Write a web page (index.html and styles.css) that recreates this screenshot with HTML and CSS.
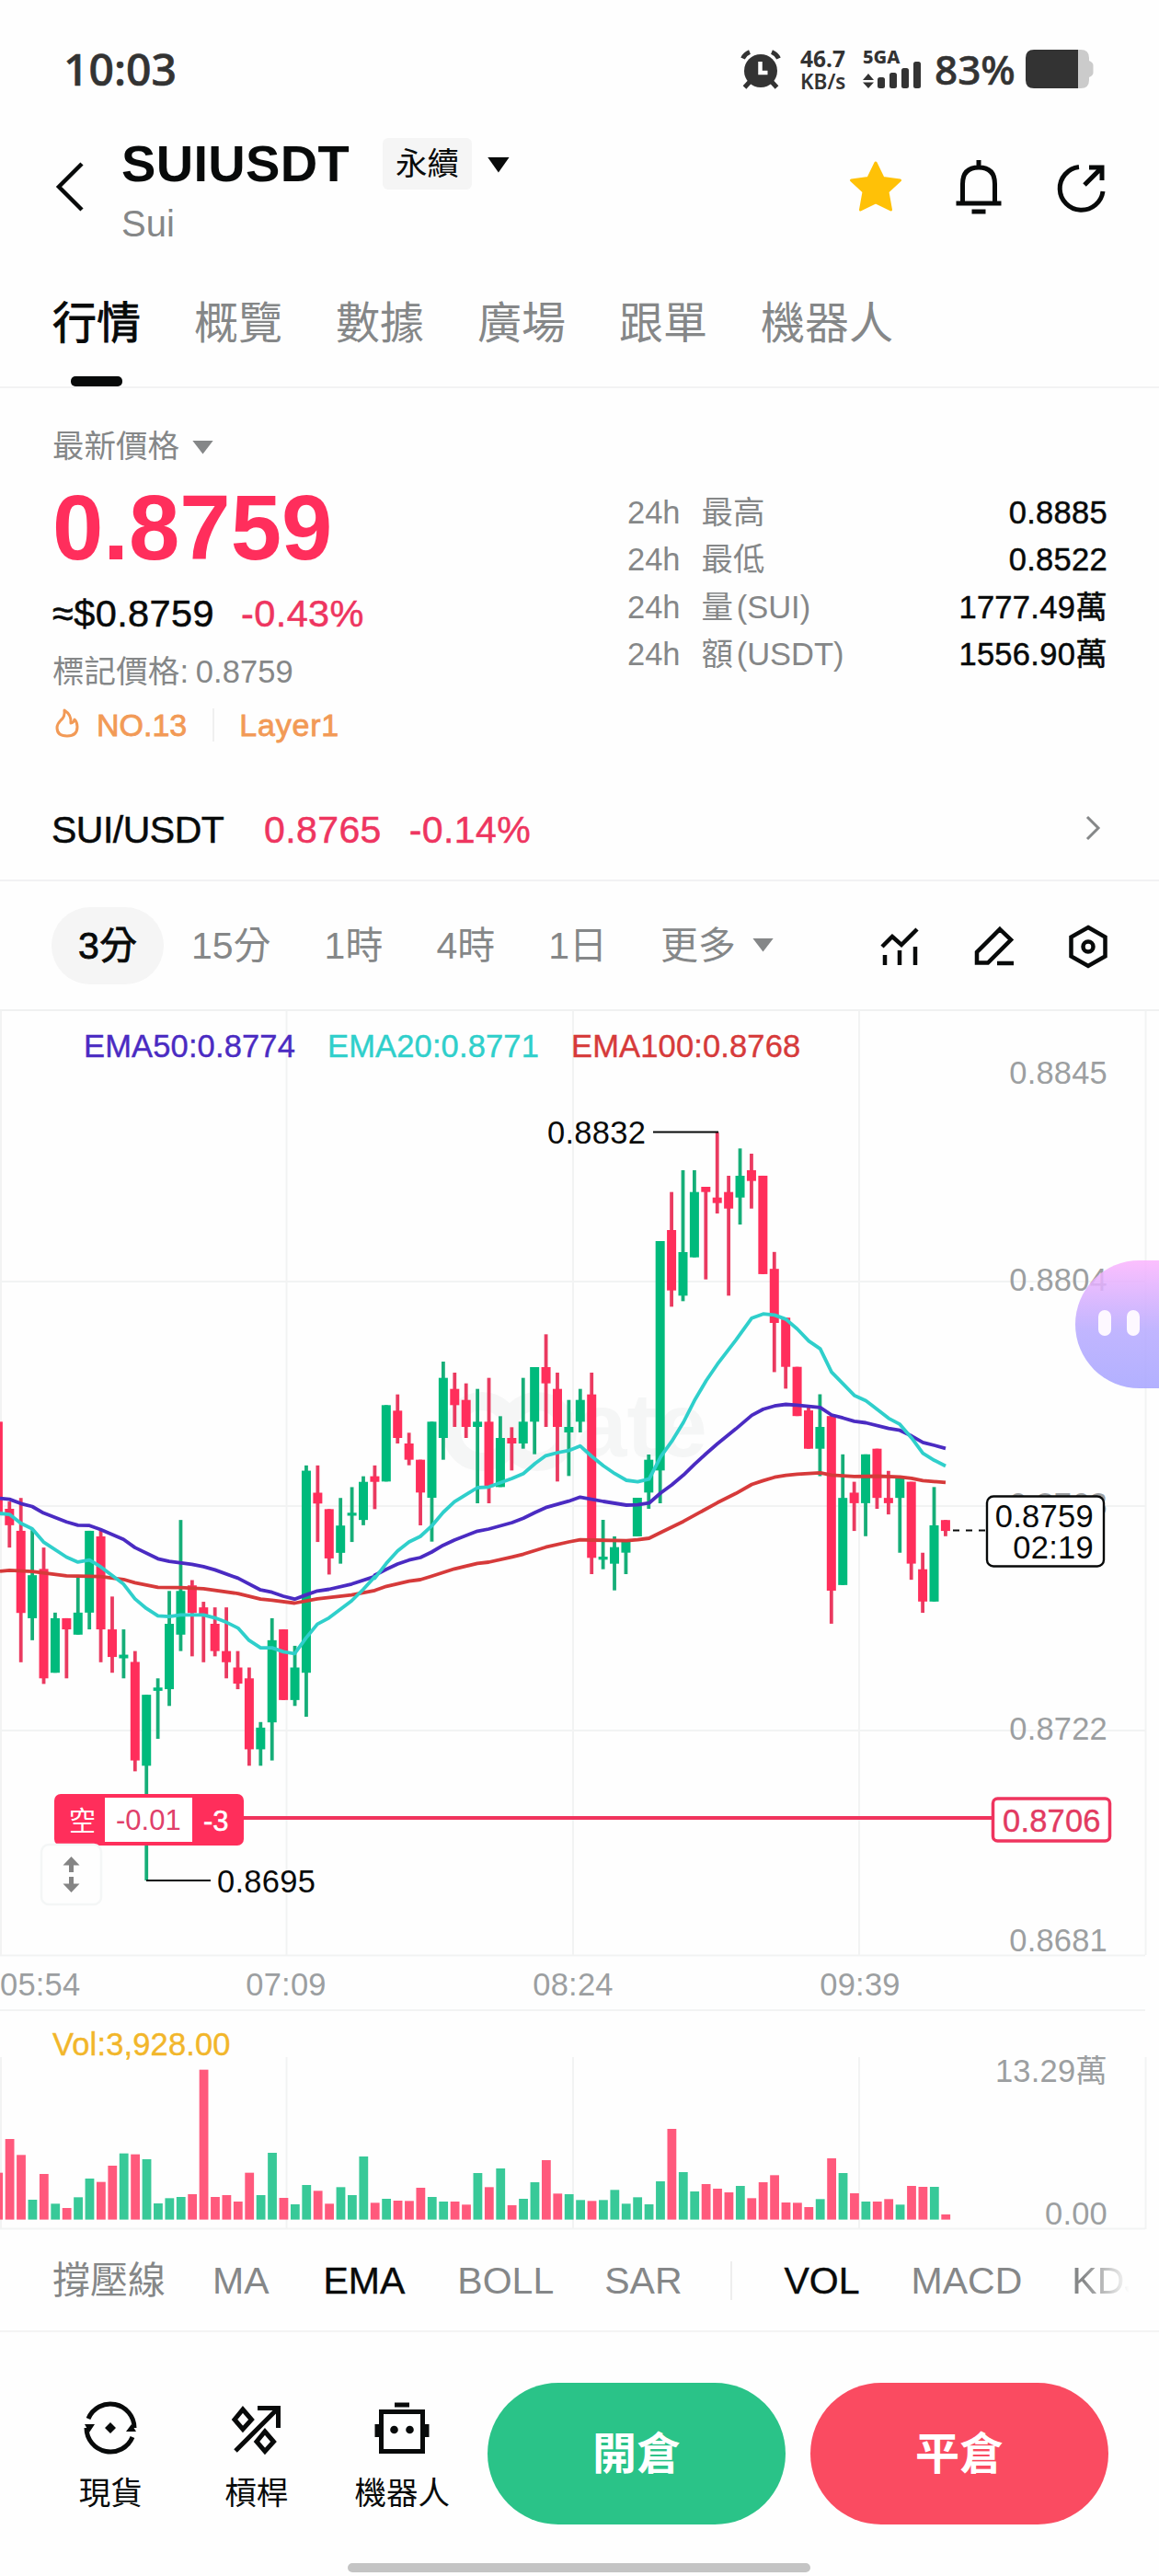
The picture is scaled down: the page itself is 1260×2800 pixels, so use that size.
FILE: index.html
```html
<!DOCTYPE html>
<html lang="zh-Hant">
<head>
<meta charset="utf-8">
<title>SUIUSDT 永續</title>
<link rel="stylesheet" href="styles.css">
</head>
<body>
<div class="statusbar">
  <span class="clock">10:03</span>
  <div class="status-right">
    <svg class="alarm" width="44" height="44" viewBox="0 0 44 44"><circle cx="22" cy="23" r="18"/><path class="alarm-line" d="M2.500 9.500Q5 4.500 10 2.500M41.500 9.500Q39 4.500 34 2.500M10 35L4.500 41M34 35L39.500 41"/><path class="alarm-hand" d="M21.500 13V25H29.500"/></svg>
    <div class="speed"><span>46.7</span><span>KB/s</span></div>
    <div class="signal"><span>5GA</span>
      <svg width="66" height="32" viewBox="0 0 66 32"><path d="M6 14L12 21H0zM6 30L12 23.500H0z"/><rect x="16" y="18" width="8" height="12" rx="2.500"/><rect x="29" y="13" width="8" height="17" rx="2.500"/><rect x="42" y="8" width="8" height="22" rx="2.500"/><rect x="55" y="1" width="8" height="29" rx="2.500"/></svg>
    </div>
    <span class="percent">83%</span>
    <svg width="74" height="42" viewBox="0 0 74 42"><path class="battery-rest" d="M50 0H60Q69 0 69 9V12Q73.500 14 73.500 17V25Q73.500 28 69 30V33Q69 42 60 42H50z"/><path d="M9 0H57V42H9Q0 42 0 33V9Q0 0 9 0z"/></svg>
  </div>
</div>

<header class="header">
  <svg class="back" width="32" height="56" viewBox="0 0 32 56"><path d="M29 3L4 28L29 53"/></svg>
  <div class="pair">
    <div class="pair-top"><h1>SUIUSDT</h1><span class="badge">永續</span><i class="caret caret-dark"></i></div>
    <div class="pair-sub">Sui</div>
  </div>
  <div class="header-icons">
    <svg class="star" width="64" height="64" viewBox="0 0 64 64"><path d="M32 6L40 22.500L58.500 25L45 37.500L48.500 57L32 49L15.500 57L19 37.500L5.500 25L24 22.500z"/></svg>
    <svg class="line-icon" width="64" height="64" viewBox="0 0 64 64"><path d="M14.500 50V29Q14.500 11 32 11Q49.500 11 49.500 29V50M7.500 50H56.500M32 3V11M24.500 59H39.500"/></svg>
    <svg class="line-icon" width="64" height="64" viewBox="0 0 64 64"><path d="M29 10.500A23.500 23.500 0 1 0 55 37M35 30L53 12M40 11H54V25"/></svg>
  </div>
</header>

<nav class="tabs">
  <span class="tab active">行情</span><span class="tab">概覽</span><span class="tab">數據</span><span class="tab">廣場</span><span class="tab">跟單</span><span class="tab">機器人</span>
</nav>

<section class="summary">
  <div class="quote">
    <div class="quote-label">最新價格<i class="caret caret-gray"></i></div>
    <div class="price">0.8759</div>
    <div class="approx"><span>≈$0.8759</span><span class="down">-0.43%</span></div>
    <div class="mark">標記價格: 0.8759</div>
    <div class="tags">
      <svg width="28" height="34" viewBox="0 0 28 34"><path d="M11 3Q12 10 7 14Q3 18 3 22Q3 31 14 31Q25 31 25 21Q25 16 22 13Q21 17 18 17Q19 8 11 3z"/></svg>
      <span>NO.13</span><i class="tag-rule"></i><span class="tag-layer">Layer1</span>
    </div>
  </div>
  <dl class="stats">
    <div><dt><span>24h</span>最高</dt><dd>0.8885</dd></div>
    <div><dt><span>24h</span>最低</dt><dd>0.8522</dd></div>
    <div><dt><span>24h</span>量 (SUI)</dt><dd>1777.49萬</dd></div>
    <div><dt><span>24h</span>額 (USDT)</dt><dd>1556.90萬</dd></div>
  </dl>
</section>

<div class="spot">
  <span class="spot-name">SUI/USDT</span><span class="down">0.8765</span><span class="down spot-change">-0.14%</span>
  <svg width="18" height="30" viewBox="0 0 18 30"><path d="M3 3L15 15L3 27"/></svg>
</div>

<div class="intervals">
  <span class="interval on">3分</span><span class="interval">15分</span><span class="interval">1時</span><span class="interval">4時</span><span class="interval">1日</span><span class="interval more">更多<i class="caret caret-gray"></i></span>
  <div class="tools">
    <svg width="48" height="48" viewBox="0 0 48 48"><path d="M4 24L15 13L25 22L42 5M7 33V44M23 28V44M40 24V44"/></svg>
    <svg width="48" height="48" viewBox="0 0 48 48"><path d="M30 5L42 16.500L17 41.500H5V30zM27 42H45"/></svg>
    <svg width="48" height="48" viewBox="0 0 48 48"><path d="M24 3L42.500 13.500V34.500L24 45L5.500 34.500V13.500z"/><circle cx="24" cy="24" r="5.500"/></svg>
  </div>
</div>

<main class="chart">
  <svg class="price-chart" width="1260" height="1087" viewBox="0 1099 1260 1087">
    <path class="grid" d="M1 1099V2125M311.500 1099V2125M623 1099V2125M934 1099V2125M1245.500 1099V2125M0 1393H1245M0 1637H1245M0 1881H1245M0 2125.500H1245M0 2185H1245"/>
    <g class="watermark"><circle cx="524" cy="1556" r="33"/><circle cx="584" cy="1556" r="33"/><text x="627" y="1583">ate</text></g>
    <g class="axis">
      <text x="1204" y="1178" text-anchor="end">0.8845</text>
      <text x="1204" y="1403" text-anchor="end">0.8804</text>
      <text x="1204" y="1647" text-anchor="end">0.8763</text>
      <text x="1204" y="1891" text-anchor="end">0.8722</text>
      <text x="1204" y="2121" text-anchor="end">0.8681</text>
      <text x="0" y="2169">05:54</text>
      <text x="311" y="2169" text-anchor="middle">07:09</text>
      <text x="623" y="2169" text-anchor="middle">08:24</text>
      <text x="935" y="2169" text-anchor="middle">09:39</text>
    </g>
    <g id="candles"></g>
    <g id="averages"></g>
    <text class="legend ema50" x="91" y="1149">EMA50:0.8774</text>
    <text class="legend ema20" x="356" y="1149">EMA20:0.8771</text>
    <text class="legend ema100" x="621" y="1149">EMA100:0.8768</text>
    <path class="leader" d="M710 1230.500H781M159 2044H229"/>
    <text class="extreme" x="595" y="1243">0.8832</text>
    <text class="extreme" x="236" y="2057">0.8695</text>
    <path class="entry-line" d="M264 1976H1078"/>
    <rect class="entry-box" x="1079.500" y="1955" width="127" height="46" rx="5"/>
    <text class="entry-price" x="1090" y="1991">0.8706</text>
    <rect class="entry-tag" x="59" y="1950" width="206" height="56" rx="7"/>
    <rect class="entry-size" x="114" y="1954" width="95" height="48"/>
    <text class="entry-side" x="75" y="1990">空</text>
    <text class="entry-amount" x="126" y="1989">-0.01</text>
    <text class="entry-pnl" x="221" y="1990">-3</text>
    <path class="dash" d="M1036 1663.500H1071"/>
    <rect class="now-box" x="1073" y="1626.500" width="127" height="76" rx="7"/>
    <text class="extreme" x="1189" y="1660" text-anchor="end">0.8759</text>
    <text class="extreme" x="1189" y="1693.500" text-anchor="end">02:19</text>
    <rect class="stretch" x="45" y="2005" width="65" height="65" rx="8"/>
    <path class="stretch-arrows" d="M77.500 2018L86.500 2027.500H80V2035H75V2027.500H68.500zM77.500 2057L86.500 2047.500H80V2040H75V2047.500H68.500z"/>
  </svg>
  <svg class="volume-chart" width="1260" height="239" viewBox="0 2186 1260 239">
    <path class="grid" d="M1 2236V2423M311.500 2236V2423M623 2236V2423M934 2236V2423M1245.500 2236V2423M0 2422.500H1245"/>
    <g id="volumes"></g>
    <text class="legend vol" x="57" y="2234">Vol:3,928.00</text>
    <g class="axis"><text x="1204" y="2263" text-anchor="end">13.29萬</text><text x="1204" y="2418" text-anchor="end">0.00</text></g>
  </svg>
  <div class="bot"><i></i><i></i></div>
</main>

<div class="indicators">
  <span>撐壓線</span><span>MA</span><span class="on">EMA</span><span>BOLL</span><span>SAR</span><i></i><span class="on">VOL</span><span>MACD</span><span class="kdj">KDJ</span>
</div>

<footer class="footer">
  <div class="shortcuts">
    <div class="shortcut"><svg width="64" height="64" viewBox="0 0 64 64"><path d="M8 22A26 26 0 0 1 58 32M56 42A26 26 0 0 1 6 32"/><path class="solid" d="M60 36H49L55 28zM4 28H15L9 37zM32 26L38 32L32 38L26 32z"/></svg><span>現貨</span></div>
    <div class="shortcut"><svg width="64" height="64" viewBox="0 0 64 64"><path d="M9 57L55 11M33 10.500H55.500V32M17 12L26.500 23L17 33.500L8 23zM41 36L50.500 47L41 57.500L32 47z"/></svg><span>槓桿</span></div>
    <div class="shortcut"><svg width="64" height="64" viewBox="0 0 64 64"><path d="M9.500 14.500H54.500V57.500H9.500zM24 7H40M5 28V42M59 28V42"/><circle class="solid" cx="23.500" cy="34" r="4.300"/><circle class="solid" cx="40.500" cy="34" r="4.300"/></svg><span>機器人</span></div>
  </div>
  <button class="trade open">開倉</button>
  <button class="trade close">平倉</button>
  <i class="homebar"></i>
</footer>
<script src="chart.js"></script>
</body>
</html>
```
FILE: styles.css
```css
* { box-sizing: border-box; }
body {
  margin: 0;
  width: 1260px;
  height: 2800px;
  overflow: hidden;
  background: #fefefe;
  color: #080a0a;
  font-family: "Liberation Sans", "Noto Sans CJK TC", sans-serif;
  font-size: 34.5px;
}
svg { display: block; flex: none; overflow: visible; }
i { font-style: normal; }
.down { color: #ee3560; letter-spacing: 0.4px; }

.statusbar {
  height: 150px;
  padding: 0 71px 0 69px;
  display: flex;
  justify-content: space-between;
  color: #333;
  fill: #333;
  font-family: "Noto Sans", sans-serif;
}
.clock { font-size: 48px; font-weight: 500; line-height: 150px; -webkit-text-stroke: 0.7px; }
.status-right { display: flex; align-items: flex-start; padding-top: 54px; }
.alarm-line { fill: none; stroke: #333; stroke-width: 5; }
.alarm-hand { fill: none; stroke: #fff; stroke-width: 4.5; }
.speed {
  width: 50px;
  margin: -3px 0 0 21px;
  display: flex;
  flex-direction: column;
  font-size: 24.5px;
  font-weight: 700;
  line-height: 25px;
  white-space: nowrap;
}
.speed span + span { font-size: 22.5px; font-weight: 600; }
.signal {
  width: 66px;
  margin: -3px 0 0 18px;
  display: flex;
  flex-direction: column;
  font-size: 20px;
  font-weight: 800;
  line-height: 22px;
}
.signal svg { margin-top: -7px; }
.percent { margin: 0 0 0 12px; width: 99px; font-size: 44px; font-weight: 500; line-height: 42px; -webkit-text-stroke: 0.6px; }
.battery-rest { fill: #cbcbcb; }

.header { height: 118px; display: flex; padding: 0 52px 0 60px; }
.back { margin: 25px 40px 0 0; fill: none; stroke: #080a0a; stroke-width: 4.5; }
.pair { flex: 1; }
.pair-top { display: flex; align-items: center; height: 56px; }
h1 { margin: 0; font-size: 56px; line-height: 56px; font-weight: 700; letter-spacing: 0.3px; }
.badge {
  width: 97px;
  height: 56px;
  margin-left: 36px;
  border-radius: 6px;
  background: #f5f5f5;
  font-size: 34.5px;
  line-height: 56px;
  text-align: center;
}
.caret { display: block; width: 23px; height: 15px; clip-path: polygon(0 0, 100% 0, 50% 100%); }
.caret-dark { margin: 2px 0 0 17px; width: 24px; height: 17px; background: #080a0a; }
.caret-gray { margin: 2px 0 0 14px; background: #858788; }
.pair-sub { margin-top: 12px; font-size: 40px; line-height: 50px; color: #858788; }
.header-icons { display: flex; align-items: center; gap: 48px; height: 106px; }
.star { fill: #ffc107; stroke: #ffc107; stroke-width: 3; stroke-linejoin: round; }
.line-icon { fill: none; stroke: #080a0a; stroke-width: 5; }

.tabs {
  height: 154px;
  padding: 54px 57px 0;
  display: flex;
  gap: 58px;
  border-bottom: 2px solid #f2f2f3;
  font-size: 48px;
  line-height: 60px;
  color: #858788;
}
.tab.active {
  color: #080a0a;
  -webkit-text-stroke: 0.9px;
  display: flex;
  flex-direction: column;
  align-items: center;
}
.tab.active::after { content: ""; width: 56px; height: 11px; margin-top: 27px; border-radius: 5px; background: #080a0a; }

.summary { height: 386px; display: flex; justify-content: space-between; padding: 43px 56px 0 57px; }
.quote-label { display: flex; align-items: center; line-height: 40px; color: #858788; }
.price { margin-top: 19px; font-size: 99.5px; line-height: 100px; font-weight: 700; color: #ff2e5c; }
.approx { margin-top: 18px; display: flex; gap: 29px; font-size: 41.5px; line-height: 50px; letter-spacing: 0.4px; -webkit-text-stroke: 0.5px; }
.mark { margin-top: 18px; line-height: 40px; color: #858788; letter-spacing: 0.1px; word-spacing: -2px; }
.tags { margin-top: 18px; display: flex; align-items: center; line-height: 40px; color: #f29a56; font-size: 34px; -webkit-text-stroke: 0.8px; }
.tags svg { margin: -5px 18px 0 2px; fill: none; stroke: #f29a56; stroke-width: 3; stroke-linejoin: round; }
.tag-rule { width: 2px; height: 36px; margin: 0 27px 0 28px; background: #f0f0f0; }
.tag-layer { letter-spacing: 0.8px; }
.stats { width: 522px; margin: 67px 0 0; line-height: 51.4px; }
.stats div { display: flex; justify-content: space-between; }
.stats dt { color: #858788; word-spacing: -6px; }
.stats dt span { margin-right: 23px; }
.stats dd { margin: 0; letter-spacing: 0.3px; -webkit-text-stroke: 0.5px; }

.spot {
  height: 150px;
  padding: 64px 63px 0 56px;
  display: flex;
  border-bottom: 2px solid #f2f2f3;
  font-size: 41px;
  line-height: 60px;
  -webkit-text-stroke: 0.5px;
}
.spot-name { width: 231px; letter-spacing: -0.5px; }
.spot-change { margin-left: 30px; }
.spot svg { margin: 13px 0 0 auto; fill: none; stroke: #858788; stroke-width: 3; }

.intervals {
  height: 141px;
  padding: 28px 53px 0 56px;
  display: flex;
  align-items: flex-start;
  border-bottom: 2px solid #f0f1f1;
  font-size: 41px;
  line-height: 84px;
  color: #858788;
}
.interval { margin-right: 58px; }
.interval.on { width: 122px; margin-right: 30px; border-radius: 42px; background: #f5f5f5; color: #080a0a; text-align: center; -webkit-text-stroke: 0.8px; }
.more { display: flex; align-items: center; height: 84px; }
.more .caret { margin: -2px 0 0 18px; }
.tools { margin: 19px 0 0 auto; display: flex; gap: 54px; fill: none; stroke: #080a0a; stroke-width: 4.5; }
.more { margin-right: 0; }

.chart { position: relative; height: 1326px; }
.grid { fill: none; stroke: #f2f3f3; stroke-width: 2; }
.axis { fill: #9c9fa1; font-size: 34.5px; letter-spacing: 0.2px; }
.watermark circle { fill: none; stroke: #f5f6f6; stroke-width: 20; }
.watermark text { fill: #f5f6f6; font-size: 98px; font-weight: 700; }
.legend { font-size: 34.5px; stroke-width: 0.4; letter-spacing: 0.15px; }
.ema50 { fill: #4a2bc2; stroke: #4a2bc2; }
.ema20 { fill: #2fcfcb; stroke: #2fcfcb; }
.ema100 { fill: #d63a3a; stroke: #d63a3a; }
.vol { fill: #f2b62a; stroke: #f2b62a; }
.avg { fill: none; stroke-width: 3.8; stroke-linejoin: round; }
.wick-up { fill: #16ae78; }
.wick-down { fill: #ea3a60; }
.body-up { fill: #00ba7c; }
.body-down { fill: #ff2e5b; }
.bar-up { fill: #38c998; }
.bar-down { fill: #ff597c; }
.leader { fill: none; stroke: #080a0a; stroke-width: 2.2; }
.extreme { fill: #080a0a; font-size: 34.5px; letter-spacing: 0.3px; }
.entry-line { stroke: #f0335c; stroke-width: 4; }
.entry-box { fill: #fff; stroke: #ef345e; stroke-width: 3.5; }
.entry-price { fill: #e23a61; font-size: 34.5px; stroke: #e23a61; stroke-width: 0.4; letter-spacing: 0.2px; }
.entry-tag { fill: #ff2e5b; }
.entry-size { fill: #fff; }
.entry-side { fill: #fff; font-size: 29px; }
.entry-amount { fill: #e0406a; font-size: 31px; }
.entry-pnl { fill: #fff; font-size: 31px; stroke: #fff; stroke-width: 0.5; }
.dash { stroke: #080a0a; stroke-width: 2.2; stroke-dasharray: 7 7; }
.now-box { fill: #fff; stroke: #080a0a; stroke-width: 2.4; }
.stretch { fill: #fefefe; fill-opacity: 0.9; stroke: #f4f6f6; stroke-width: 2.5; }
.stretch-arrows { fill: #848484; }
.bot {
  position: absolute;
  right: 0;
  top: 271px;
  width: 91px;
  height: 139px;
  display: flex;
  gap: 17px;
  padding: 54px 0 0 25px;
  border-radius: 70px 0 0 70px;
  background: linear-gradient(#fbb4fed9, #b6a9ffd9 55%, #a8a6ffe0);
}
.bot i { width: 14px; height: 28px; border-radius: 7px; background: #fdf8ff; }

.indicators {
  height: 110px;
  padding-left: 57px;
  display: flex;
  align-items: center;
  border-bottom: 2px solid #f4f4f4;
  font-size: 41px;
  line-height: 60px;
  color: #858788;
  overflow: hidden;
}
.indicators span { margin-right: 57px; flex: none; }
.indicators span:nth-child(1) { margin-right: 51px; }
.indicators span:nth-child(2) { margin-right: 59px; }
.indicators span:nth-child(4) { margin-right: 55px; }
.indicators span:nth-child(7) { margin-right: 56px; }
.indicators span:nth-child(8) { margin-right: 54px; }
.indicators i { width: 2px; height: 42px; margin: 0 57px 0 -5px; background: #eee; }
.indicators .on { color: #080a0a; -webkit-text-stroke: 0.4px; }
.indicators .kdj { width: 64px; margin: 0; overflow: hidden; mask-image: linear-gradient(90deg, #000 20%, transparent 98%); }

.footer { position: relative; height: 265px; display: flex; padding: 55px 0 0 41px; }
.shortcuts { display: flex; width: 489px; padding-top: 17px; }
.shortcut { width: 158.5px; display: flex; flex-direction: column; align-items: center; line-height: 40px; }
.shortcut svg { margin-bottom: 19px; fill: none; stroke: #080a0a; stroke-width: 5; }
.shortcut .solid { fill: #080a0a; stroke: none; }
.trade {
  width: 324px;
  height: 154px;
  margin: 0 27px 0 0;
  padding: 2px 0 0;
  border: 0;
  border-radius: 77px;
  color: #fff;
  font: 700 48px/152px "Liberation Sans", "Noto Sans CJK TC", sans-serif;
}
.open { background: #2ac388; }
.close { background: #fa4b61; }
.homebar { position: absolute; left: 378px; bottom: 4px; width: 503px; height: 10px; border-radius: 5px; background: #c4c4c4; }
```
FILE: chart.js
```js
const STEP = 12.41;
const FIRST = 10.3;

// Runs of candles; every run has its own vertical origin and samples per pixel.
// Row: direction, high, body top, body bottom, low.
const runs = [
  { from: -1, y: 1540, k: 2.8, rows: [
    'd 15 15 300 300', 'd 258 280 330 398', 'd 247 347 597 747', 'u 345 482 613 680',
    'd 398 463 796 813', 'u 596 613 779 779', 'd 613 613 647 796', 'u 488 596 663 663',
    'u 347 347 596 647', 'd 345 364 647 747', 'd 547 647 731 779', 'u 647 724 735 796',
    'd 713 746 1046 1079', 'u 846 846 1062 1411', 'u 796 824 834 980', 'u 530 630 829 880',
    'u 314 530 663 713', 'd 497 513 597 729', 'd 563 580 605 747', 'd 580 630 713 729',
    'd 580 713 747 796', 'd 713 763 812 829', 'd 763 796 1012 1062', 'u 929 946 1012 1062',
    'u 613 680 930 1046', 'd 647 647 862 862', 'u 697 763 862 880', 'u 148 164 779 913',
    'd 148 231 264 381', 'd 281 281 431 480', 'u 247 331 414 447', 'u 214 292 301 381',
    'u 181 198 314 330', 'd 148 181 198 281'] },
  { from: 33, y: 1180, k: 3, rows: [
    'u 1042 1042 1291 1291', 'd 1007 1060 1149 1167', 'd 1132 1167 1220 1238', 'd 1220 1220 1327 1434',
    'u 1096 1096 1344 1487', 'u 900 953 1149 1220', 'd 936 989 1042 1113', 'd 971 1025 1113 1149',
    'u 989 1096 1113 1362', 'd 953 1096 1309 1362', 'u 1078 1149 1309 1309', 'd 1114 1149 1167 1255',
    'u 953 1096 1167 1184', 'u 918 918 1096 1202', 'd 811 918 971 1113', 'd 936 989 1113 1291',
    'u 1025 1113 1131 1273', 'u 989 1025 1096 1131', 'd 936 1007 1540 1593', 'u 1416 1536 1546 1577',
    'u 1470 1505 1559 1646', 'u 1488 1488 1523 1593', 'u 1344 1344 1470 1470', 'u 1203 1220 1327 1380',
    'u 507 507 1255 1362', 'd 347 471 668 721', 'u 276 543 685 703', 'u 276 347 560 560',
    'd 330 330 347 632', 'd 152 365 383 417', 'd 294 347 401 685', 'u 205 294 365 453',
    'd 222 276 311 401'] },
  { from: 66, y: 1180, k: 2.45, rows: [
    'd 240 240 502 502', 'd 443 488 632 763', 'd 618 618 749 807', 'd 749 749 880 880',
    'd 855 865 967 967', 'u 822 909 967 1040', 'd 880 880 1345 1433', 'u 982 1098 1330 1330',
    'd 1055 1084 1112 1186', 'u 982 982 1112 1200', 'd 967 967 1098 1127', 'd 1026 1098 1112 1142',
    'u 1040 1046 1098 1244', 'd 1055 1055 1273 1316', 'd 1244 1288 1374 1404', 'u 1069 1171 1374 1374',
    'd 1157 1157 1186 1200'] }
];

let out = '';
for (const run of runs) {
  run.rows.forEach((row, n) => {
    const [dir, ...vals] = row.split(' ');
    const [hi, top, bot, lo] = vals.map(v => run.y + v / run.k);
    const x = FIRST + (run.from + n) * STEP;
    const kind = dir === 'u' ? 'up' : 'down';
    out += `<rect class="wick-${kind}" x="${x - 1.9}" y="${hi}" width="3.8" height="${lo - hi}"/>`;
    out += `<rect class="body-${kind}" x="${x - 5}" y="${top}" width="10" height="${bot - top}"/>`;
  });
}
document.getElementById('candles').innerHTML = out;

// Moving averages: the same three runs, each as x,y samples.
const frames = [[0, 1540, 3, 2.8], [400, 1180, 3, 3], [800, 1180, 3, 2.45]];
const averages = [
  ['#d63a3a', [
    '0,470 31,467 105,471 217,484 254,485 328,486 403,495 440,505 515,519 589,520 664,523 776,538 850,555 887,558 961,567 1035,554 1147,542 1222,529',
    '22,1646 60,1633 134,1616 171,1611 208,1600 282,1576 357,1558 394,1554 470,1537 507,1528 580,1505 655,1488 692,1481 730,1482 843,1484 880,1481 917,1476 955,1457 1029,1421 1140,1360',
    '0,1086 52,1062 89,1052 126,1043 163,1038 200,1035 275,1031 312,1037 386,1041 461,1040 535,1042 573,1046 610,1052 684,1057']],
  ['#4a2bc2', [
    '0,248 31,251 68,264 105,273 142,293 217,320 254,330 292,331 328,343 403,373 440,398 515,432 552,440 626,449 664,456 701,466 776,491 850,527 887,534 924,546 961,555 998,542 1035,530 1073,525 1147,509 1222,486',
    '22,1597 60,1577 97,1560 134,1547 171,1539 208,1521 245,1499 282,1482 357,1453 394,1446 470,1425 507,1411 545,1392 580,1376 655,1355 692,1342 768,1356 843,1368 880,1367 917,1361 955,1328 991,1302 1029,1270 1065,1235 1103,1200 1140,1168',
    '0,914 52,878 89,862 126,853 163,849 200,851 275,857 312,877 349,885 386,894 424,898 498,913 535,918 573,933 610,950 647,958 684,966']],
  ['#2fcfcb', [
    '0,294 31,297 68,324 105,341 142,381 217,427 254,442 292,436 328,456 403,509 440,554 477,583 515,606 552,608 589,603 664,603 701,612 740,626 776,643 812,680 850,703 887,703 924,715 961,721 998,673 1035,631 1073,612 1147,560 1185,525 1222,487',
    '22,1607 60,1558 97,1517 134,1488 171,1470 208,1436 245,1392 282,1357 357,1311 394,1309 470,1281 507,1265 545,1232 580,1207 618,1197 655,1190 692,1175 730,1209 768,1240 805,1265 843,1287 880,1292 917,1283 955,1210 991,1160 1029,1098 1065,1027 1103,962 1140,908',
    '0,678 52,619 89,608 126,611 163,622 200,648 238,680 275,701 312,763 386,825 424,839 498,886 535,902 573,938 610,979 647,998 684,1013']]
];
document.getElementById('averages').innerHTML = averages.map(([color, parts]) => {
  const points = parts.flatMap((part, n) => part.split(' ').map(p => {
    const [x, y] = p.split(',').map(Number);
    const [ox, oy, kx, ky] = frames[n];
    return `${(ox + x / kx).toFixed(1)},${(oy + y / ky).toFixed(1)}`;
  }));
  return `<polyline class="avg" stroke="${color}" points="${points.join(' ')}"/>`;
}).join('');

// Volume: top edge of each bar, in thirds of a pixel; the letter is the bar colour.
const volumes = ('d605 d495 d547 u693 d609 u706 d720 u685 u624 d635 d582 u542 d545 u561 u705 u688 u684 d675 d269 d684 d678 d699 d605 u678 u540 d687 ' +
  'u708 u645 d664 d706 u652 u678 u552 d703 u690 d696 d697 d654 u684 u699 d699 d709 u606 d652 u591 d711 u690 u636 d564 d673 u675 u694 ' +
  'd697 u694 u661 u706 u685 u708 u633 d462 u603 u666 d642 d657 d669 u648 d688 d636 d613 d702 d703 d717 u691 d558 u606 d672 u699 d699 d691 u709 d648 d651 u651 d741').split(' ');
document.getElementById('volumes').innerHTML = volumes.map((v, n) => {
  const x = FIRST + (n - 1) * STEP + 0.3;
  const top = 2160 + Number(v.slice(1)) / 3;
  return `<rect class="bar-${v[0] === 'u' ? 'up' : 'down'}" x="${x - 4.9}" y="${top}" width="9.8" height="${2412.6 - top}"/>`;
}).join('');
```
